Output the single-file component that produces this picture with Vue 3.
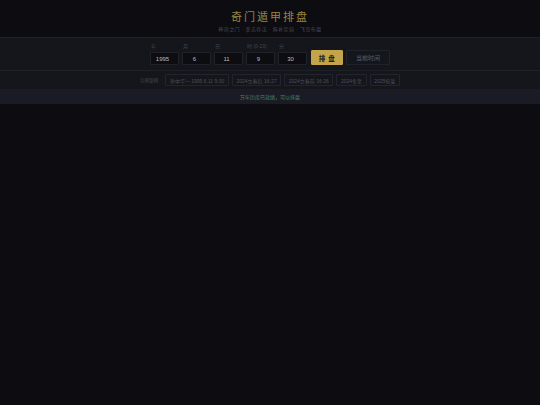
<script setup>
import { ref } from 'vue';

const form = ref({ year: 1995, month: 6, day: 11, hour: 9, minute: 30 });

const fields = [
  { key: 'year', label: '年' },
  { key: 'month', label: '月' },
  { key: 'day', label: '日' },
  { key: 'hour', label: '时 (0-23)' },
  { key: 'minute', label: '分' }
];

const samples = [
  '孙中华— 1995.6.11 9:30',
  '2024立春后 16:27',
  '2024立春前 16:26',
  '2024冬至',
  '2025惊蛰'
];

function setNow() {
  const d = new Date();
  form.value = {
    year: d.getFullYear(),
    month: d.getMonth() + 1,
    day: d.getDate(),
    hour: d.getHours(),
    minute: d.getMinutes()
  };
}
</script>

<template>
  <div class="page">
    <header class="top">
      <h1 class="title">奇门遁甲排盘</h1>
      <p class="subtitle">神奇之门 · 衷志存法 · 拆补定局 · 飞宫布盘</p>
    </header>

    <section class="form-bar">
      <div v-for="f in fields" :key="f.key" class="field">
        <label>{{ f.label }}</label>
        <input v-model="form[f.key]" type="text" />
      </div>
      <button type="button" class="btn-primary">排 盘</button>
      <button type="button" class="btn-ghost" @click="setNow">当前时间</button>
    </section>

    <section class="sample-bar">
      <span class="sample-label">示例案例:</span>
      <button v-for="s in samples" :key="s" type="button" class="sample">{{ s }}</button>
    </section>

    <div class="status">万年历库已就绪&#xFF0C;可以排盘</div>
  </div>
</template>

<style>
html, body { background: #0c0c11; }
</style>

<style scoped>
.page { min-height: 405px; background: #0c0c11; font-family: "Liberation Sans", "Noto Sans CJK SC", sans-serif; }

.top { height: 37px; box-sizing: border-box; padding-top: 9px; text-align: center; }
.title { margin: 0; font-family: "Noto Sans CJK SC", serif; font-size: 11px; line-height: 14px; font-weight: 400; letter-spacing: 2px; color: #9c8342; }
.subtitle { margin: 3px 0 0; font-size: 5px; line-height: 7px; letter-spacing: .4px; color: #4d4d57; }

.form-bar { height: 34px; box-sizing: border-box; display: flex; justify-content: center; align-items: flex-end; gap: 3px; padding-bottom: 5px; background: #14161b; border-top: 1px solid #1f2127; border-bottom: 1px solid #1f2127; }
.field { display: flex; flex-direction: column; gap: 2px; width: 29px; }
.field label { padding-left: 1px; font-size: 5px; line-height: 7px; color: #44444e; white-space: nowrap; }
.field input { width: 100%; height: 13px; box-sizing: border-box; padding: 0 4px 0 0; border: 1px solid #20222a; border-radius: 1px; background: #0c0c11; color: #bcbcc0; font-family: "Liberation Sans", sans-serif; font-size: 6px; text-align: center; outline: none; }
.btn-primary { width: 32px; height: 15px; margin-left: 1px; padding: 0; border: 1px solid #c4a44a; border-radius: 1px; background: #c4a44a; color: #1b170c; font-family: inherit; font-size: 6.5px; font-weight: 700; letter-spacing: .5px; }
.btn-ghost { width: 44px; height: 15px; padding: 0; border: 1px solid #20222a; border-radius: 1px; background: #14161b; color: #5f5f6c; font-family: inherit; font-size: 6px; }

.sample-bar { height: 19px; box-sizing: border-box; display: flex; justify-content: center; align-items: center; gap: 3px; background: #14161b; border-bottom: 1px solid #1a1c22; }
.sample-label { margin-right: 3px; font-size: 4.5px; color: #484852; }
.sample { height: 12px; padding: 0 3.6px; border: 1px solid #23252e; border-radius: 1px; background: transparent; color: #4f4f5a; font-family: inherit; font-size: 5px; white-space: nowrap; }

.status { height: 14px; line-height: 14px; text-align: center; background: #1a1b25; box-sizing: border-box; font-size: 5px; color: #4a8570; }
</style>
